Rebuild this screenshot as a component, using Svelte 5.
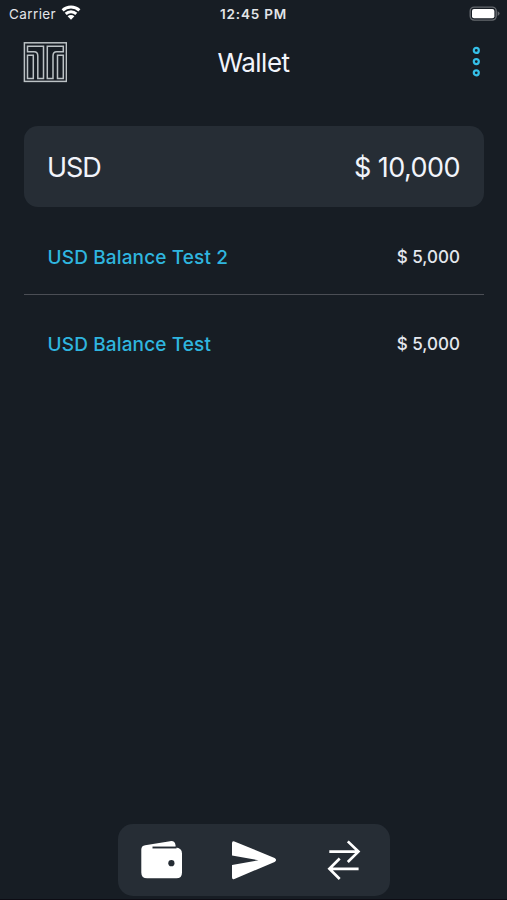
<script>
  const currency = { code: 'USD', total: 10000 };

  const balances = [
    { name: 'USD Balance Test 2', amount: 5000 },
    { name: 'USD Balance Test', amount: 5000 },
  ];

  const format = (n) => '$ ' + n.toLocaleString('en-US');
</script>

<div class="screen">
  <div class="status">
    <div class="carrier">
      <span>Carrier</span>
      <svg width="20" height="16" viewBox="0 0 20 16">
        <g fill="none" stroke="#fff" stroke-width="2.9">
          <path d="M1.6 6.4a12.2 12.2 0 0 1 16.8 0" />
          <path d="M4.7 9.9a7.7 7.7 0 0 1 10.6 0" />
        </g>
        <path d="M10 15.8l-3.4-3.5a4.8 4.8 0 0 1 6.8 0z" fill="#fff" />
      </svg>
    </div>
    <span class="time">12:45 PM</span>
    <svg class="battery" width="31" height="16" viewBox="0 0 31 16">
      <rect x="1.2" y="1.1" width="26" height="13" rx="4" fill="none" stroke="#65696e" stroke-width="1.4" />
      <rect x="3" y="2.9" width="22.4" height="9.4" rx="2" fill="#fff" />
      <path d="M28.6 5.3q2 .8 2 2.3t-2 2.3z" fill="#65696e" />
    </svg>
  </div>

  <header>
    <svg class="logo" width="44" height="41" viewBox="-0.4 0.4 44 41">
      <g fill="none" stroke="#bcc2c5" stroke-width="1.5">
        <rect x="1" y="1.2" width="42" height="38.6" />
        <path d="M4.1 4.6H20.1V36.8H14.4V14.3Q14.4 10.2 10.7 10.2H4.1Z" />
        <path d="M4.1 13.6H9.9V36.8H4.1Z" />
        <path d="M39.9 4.6H23.9V36.8H29.6V14.3Q29.6 10.2 33.3 10.2H39.9Z" />
        <path d="M39.9 13.6H34.1V36.8H39.9Z" />
      </g>
    </svg>
    <h1>Wallet</h1>
    <svg class="more" width="10" height="32" viewBox="0 0 10 32">
      <g fill="none" stroke="#35bfe8" stroke-width="2.2">
        <circle cx="5.3" cy="4.4" r="2.5" />
        <circle cx="5.3" cy="15.6" r="2.5" />
        <circle cx="5.3" cy="26.8" r="2.5" />
      </g>
    </svg>
  </header>

  <main>
    <div class="total">
      <span class="code">{currency.code}</span>
      <span class="sum">{format(currency.total)}</span>
    </div>

    <ul>
      {#each balances as balance}
        <li>
          <span class="name">{balance.name}</span>
          <span class="amount">{format(balance.amount)}</span>
        </li>
      {/each}
    </ul>
  </main>

  <nav>
    <svg width="44" height="40" viewBox="0 0 44 40">
      <path d="M1.3 9.5Q1.3 5.8 5.2 5.2L30 1.2Q35 .5 35.6 5.4V7.6Q42 8 42 13.5V32.4Q42 38.3 36.4 38.3H7.2Q1.3 38.3 1.3 32.4Z" fill="#fff" />
      <path d="M12.5 7.5H36.5" stroke="#252c34" stroke-width="1.9" />
      <circle cx="31.4" cy="23.2" r="3.1" fill="#252c34" />
    </svg>
    <svg width="46" height="40" viewBox="0 0 46 40">
      <path d="M1 3.2Q1 .6 3.4 1.5L43.6 18Q46.6 20 43.6 22L3.4 38.9Q1 39.8 1 37.2V25L27.5 20.2 1 15.4Z" fill="#fff" />
    </svg>
    <svg width="34" height="40" viewBox="0 0 34 40">
      <g fill="none" stroke="#fff" stroke-width="2.7">
        <path d="M2.3 11.6H31.4M20.8 1.4L31.4 11.6 20.8 22" />
        <path d="M31.6 28.8H2.4M12.7 18.5L2.4 28.8 12.7 39" />
      </g>
    </svg>
  </nav>
</div>

<style>
  :global(body) { background: #171d24; }

  .screen {
    box-sizing: border-box;
    display: flex;
    flex-direction: column;
    height: 900px;
    padding-bottom: 3px;
    border-bottom: 1px solid #0d0c14;
    background: #171d24;
    color: #f1f4fb;
    font-family: Inter, "Liberation Sans", sans-serif;
    overflow: hidden;
  }

  .status {
    display: grid;
    grid-template-columns: 1fr auto 1fr;
    align-items: center;
    height: 27px;
    padding: 0 7px 0 9px;
    font-size: 13.5px;
    color: #e3e5e8;
  }
  .carrier { display: flex; align-items: center; gap: 5px; letter-spacing: 0.4px; }
  .carrier svg { margin-top: -3px; }
  .time { padding-right: 2px; font-size: 13.5px; font-weight: 600; letter-spacing: 0.8px; }
  .battery { justify-self: end; }

  header {
    display: grid;
    grid-template-columns: 1fr auto 1fr;
    align-items: center;
    height: 70px;
    padding: 0 26px 0 23px;
  }
  h1 { margin: 0; padding-left: 3px; font-size: 26px; font-weight: 400; letter-spacing: -0.5px; }
  .more { justify-self: end; }

  main { flex: 1; padding: 29px 23px 0 24px; }

  .total {
    box-sizing: border-box;
    display: flex;
    align-items: center;
    justify-content: space-between;
    height: 81px;
    padding: 1px 24px 0 23px;
    border-radius: 14px;
    background: #262d35;
    font-size: 27px;
  }
  .code { letter-spacing: -1.1px; }
  .sum { letter-spacing: -0.55px; }

  ul { margin: 0; padding: 0; list-style: none; }
  li {
    box-sizing: border-box;
    display: flex;
    align-items: center;
    justify-content: space-between;
    height: 88px;
    padding: 12px 24px 0 23.6px;
  }
  li:not(:last-child) { border-bottom: 1px solid #4b4e55; }
  li:last-child { height: 86px; }
  .name { padding-top: 1px; font-size: 19px; font-weight: 500; letter-spacing: 0.13px; color: #2fb5df; }
  .amount { font-size: 17px; font-weight: 500; color: #e4e7ee; }

  nav {
    display: flex;
    align-items: center;
    justify-content: space-between;
    align-self: center;
    box-sizing: border-box;
    width: 272px;
    height: 72px;
    padding: 0 29px 0 22px;
    border-radius: 15px;
    background: #262d35;
  }
  nav svg:nth-child(2) { margin-right: 3px; }
</style>
